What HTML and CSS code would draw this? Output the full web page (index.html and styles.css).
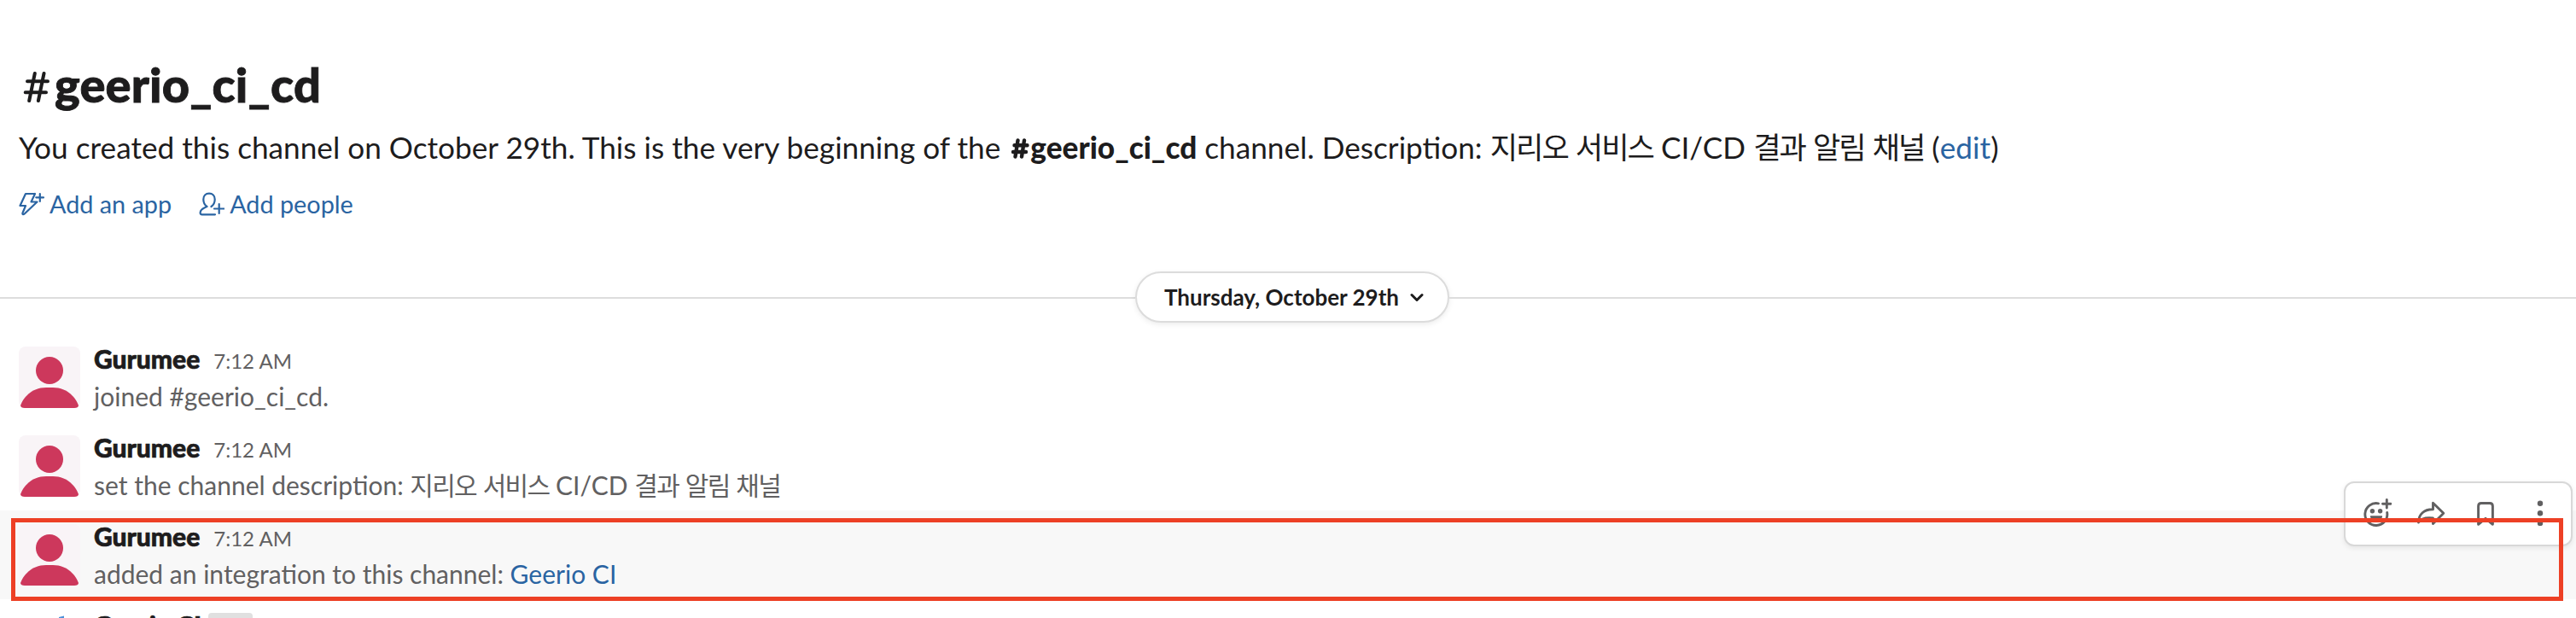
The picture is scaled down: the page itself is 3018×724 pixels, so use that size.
FILE: index.html
```
<!DOCTYPE html>
<html lang="en">
<head>
<meta charset="utf-8">
<title>geerio_ci_cd</title>
<link rel="stylesheet" href="styles.css">
</head>
<body>
<svg class="defs" width="0" height="0">
  <symbol id="avatar" viewBox="0 0 72 72">
    <rect width="72" height="72" rx="8" fill="#f9f4f7"/>
    <circle cx="36" cy="28" r="16" fill="#cd385c"/>
    <path d="M2 69C5 61 14 48 32 48h8c18 0 27 13 30 21 0 2-2 3-5 3H7c-3 0-5-1-5-3z" fill="#cd385c"/>
  </symbol>
</svg>
<main class="channel">
  <header class="intro">
    <h1 class="title"><svg class="hash" viewBox="0 0 32 38"><path d="M14.800 2L8.200 34M25.500 2L18.900 34M6 11.300H30M3.700 24.300H28"/></svg>geerio_ci_cd</h1>
    <p class="about">You created this channel on October 29th. This is the very beginning of the <strong class="mention"><svg class="hash-small" viewBox="0 0 22 24"><path d="M8.500 2.500L5.500 21.500M16 2.500L13 21.500M4.500 8.300H19.500M3 16H18"/></svg>geerio_ci_cd</strong> channel. Description: <span class="ko">지리오</span> <span class="ko">서비스</span> CI/CD <span class="ko">결과</span> <span class="ko">알림</span> <span class="ko">채널</span> (<a class="link">edit</a>)</p>
    <nav class="actions">
      <a class="action link"><svg class="action-icon" viewBox="0 0 30 30"><path d="M19 3H8L1.500 17H8L4.500 25.500C4 27.700 5.500 27.500 6.700 26.500L21.500 12.500H14.500L19 3M24.800 3V12M20.300 7.300H29"/></svg>Add an app</a>
      <a class="action link"><svg class="action-icon" viewBox="0 0 30 30"><path d="M19 27.300H3.500C1.500 27.300 1.300 25.500 2 23.500C3.200 20.500 7 19 9.500 18C6.500 16 5.300 13 5.300 9.500C5.300 5.500 8 2.700 12 2.700S18.700 5.500 18.700 9.500C18.700 13 17.300 16 14.500 18M23.700 15V26M18 20.500H29.300"/></svg>Add people</a>
    </nav>
  </header>

  <div class="divider">
    <button class="date">Thursday, October 29th<svg class="chevron" viewBox="0 0 16 12"><path d="M2 3.500L8 9.500L14 3.500"/></svg></button>
  </div>

  <section class="messages">
    <article class="message">
      <svg class="avatar"><use href="#avatar"/></svg>
      <div class="body">
        <div class="meta"><b class="name">Gurumee</b><time class="time">7:12 AM</time></div>
        <p class="text">joined #geerio_ci_cd.</p>
      </div>
    </article>
    <article class="message">
      <svg class="avatar"><use href="#avatar"/></svg>
      <div class="body">
        <div class="meta"><b class="name">Gurumee</b><time class="time">7:12 AM</time></div>
        <p class="text">set the channel description: <span class="ko">지리오</span> <span class="ko">서비스</span> CI/CD <span class="ko">결과</span> <span class="ko">알림</span> <span class="ko">채널</span></p>
      </div>
    </article>
    <article class="message hovered">
      <svg class="avatar"><use href="#avatar"/></svg>
      <div class="body">
        <div class="meta"><b class="name">Gurumee</b><time class="time">7:12 AM</time></div>
        <p class="text">added an integration to this channel: <a class="link">Geerio CI</a></p>
      </div>
      <div class="toolbar">
        <svg class="tool" viewBox="0 0 36 36"><path d="M20.500 5.800A13 13 0 1 0 30.700 16.500M30.300 1.500V11M25.500 6.200H35"/><path class="dot" d="M11.500 20.300H24.500Q25.200 20.300 25 21.500Q23.500 27 18 27T11 21.500Q10.800 20.300 11.500 20.300Z"/><circle class="dot" cx="13.400" cy="14.800" r="2.700"/><circle class="dot" cx="22.600" cy="14.800" r="2.700"/></svg>
        <svg class="tool" viewBox="0 0 36 36"><path d="M20.500 5.300L32.800 17.300L20.500 29.500V23C12 22 6.500 23.500 3.500 28C3.500 18.500 10 12.500 20.500 12.800Z"/></svg>
        <svg class="tool" viewBox="0 0 36 36"><path d="M9.600 30.300V9Q9.600 5.500 13 5.500H23Q26.400 5.500 26.400 9V30.300L18 23.300Z"/></svg>
        <svg class="tool" viewBox="0 0 36 36"><circle class="dot" cx="18" cy="5.800" r="3.200"/><circle class="dot" cx="18" cy="17.300" r="3.200"/><circle class="dot" cx="18" cy="28.900" r="3.200"/></svg>
      </div>
      <div class="highlight"></div>
    </article>
    <article class="message">
      <svg class="avatar" viewBox="0 0 72 72"><path d="M47 8V5L53 3.500V8Z" fill="#4a90d9"/></svg>
      <div class="body">
        <div class="meta"><b class="name">Geerio CI</b><span class="badge">APP</span></div>
      </div>
    </article>
  </section>
</main>
</body>
</html>
```

FILE: styles.css
```
* { box-sizing: border-box; }

body {
  margin: 0;
  background: #fff;
  color: #1d1c1d;
  font-family: Lato, "Noto Sans CJK KR", sans-serif;
  font-size: 30px;
  line-height: 44px;
}

h1, p { margin: 0; }

svg { flex: none; fill: none; stroke-linecap: round; stroke-linejoin: round; }

.defs { position: absolute; }

.channel { height: 724px; overflow: hidden; }

.intro { padding: 64px 22px 0; height: 318px; }

.title {
  display: flex;
  align-items: center;
  height: 70px;
  font-size: 56px;
  font-weight: 900;
  letter-spacing: .15px;
  line-height: 70px;
  -webkit-text-stroke: .9px #1d1c1d;
}

.hash {
  width: 32px;
  height: 38px;
  margin: 8px 6px 0 4px;
  stroke: #1d1c1d;
  stroke-width: 4;
}

.about { margin-top: 12px; font-size: 35.2px; line-height: 52px; white-space: nowrap; }

.mention { font-weight: 900; }

.hash-small {
  width: 22px;
  height: 24px;
  margin: 0 1px 0 3px;
  stroke: #1d1c1d;
  stroke-width: 4.4;
}

.ko { letter-spacing: -.057em; }

.link { color: #2a64a2; }

.actions { display: flex; gap: 32px; margin-top: 19px; font-size: 28.8px; }

.action { display: flex; align-items: center; gap: 6px; }

.action-icon { width: 30px; height: 30px; stroke: currentColor; stroke-width: 2.2; }

.divider { display: flex; align-items: center; height: 60px; }

.divider::before, .divider::after { content: ""; height: 2px; margin-top: 2px; background: #dddddd; flex: 0 0 1330px; }

.divider::after { flex: 1; }

.date {
  display: flex;
  align-items: center;
  width: 368px;
  height: 60px;
  padding: 0 0 0 32px;
  border: 2px solid #dcdcdc;
  border-radius: 30px;
  background: #fff;
  box-shadow: 0 2px 6px rgba(0, 0, 0, .08);
  color: #1d1c1d;
  font: 700 26px/38px Lato, sans-serif;
  white-space: nowrap;
}

.chevron { width: 16px; height: 12px; margin-left: 13px; stroke: #1d1c1d; stroke-width: 3; }

.messages { margin-top: 12px; }

.message {
  position: relative;
  display: flex;
  gap: 16px;
  height: 104px;
  padding: 8px 22px;
}

.hovered { background: #f8f8f8; }

.avatar { width: 72px; height: 72px; margin-top: 8px; }

.meta { display: flex; align-items: baseline; height: 44px; }

.name { font-weight: 900; -webkit-text-stroke: .7px #1d1c1d; }

.time { margin-left: 16px; color: #616061; font-size: 24px; }

.text { color: #616061; white-space: nowrap; }

.badge {
  align-self: flex-start;
  width: 52px;
  height: 26px;
  margin: 8px 0 0 8px;
  border-radius: 4px;
  background: #e0e0e0;
  color: #616061;
  font-size: 20px;
  line-height: 26px;
  text-align: center;
}

.toolbar {
  position: absolute;
  top: -34px;
  right: 4px;
  display: flex;
  align-items: center;
  gap: 28px;
  width: 268px;
  height: 76px;
  padding-left: 18px;
  border: 2px solid #d8d8d8;
  border-radius: 12px;
  background: #fff;
  box-shadow: 0 2px 6px rgba(0, 0, 0, .08);
}

.tool { width: 36px; height: 36px; stroke: #616061; stroke-width: 2.9; }

.dot { fill: #616061; stroke: none; }

.highlight {
  position: absolute;
  top: 9px;
  left: 13px;
  width: 2990px;
  height: 97px;
  border: 5px solid #ed4025;
}
```
